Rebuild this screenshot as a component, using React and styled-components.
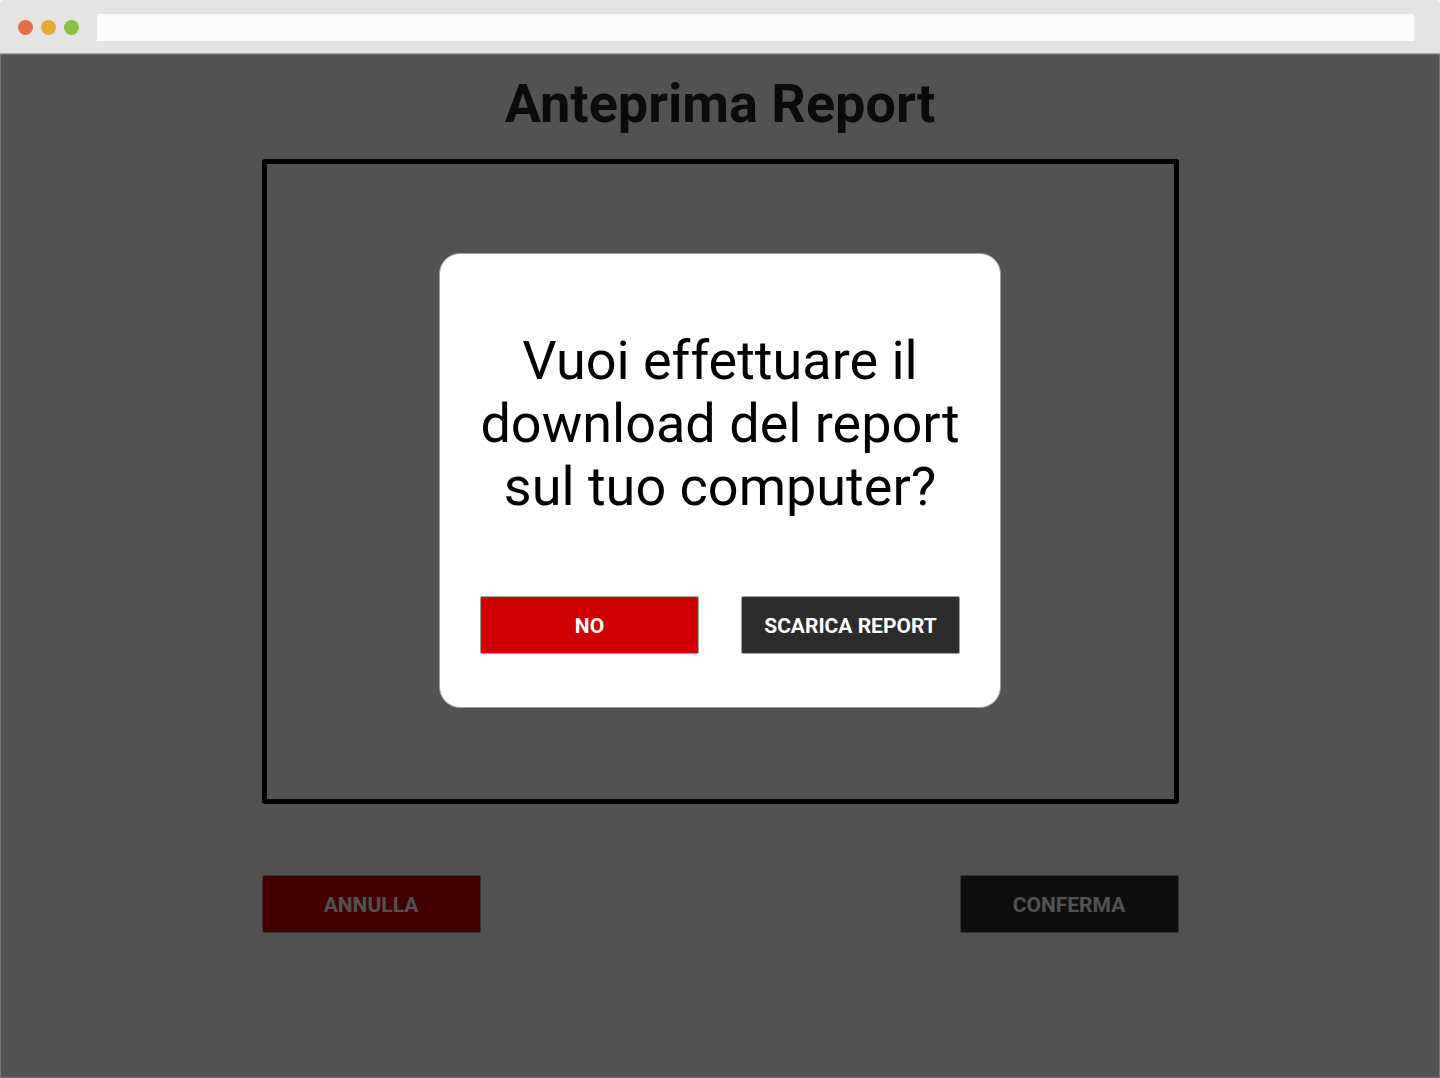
import React from "react";
import styled, { createGlobalStyle } from "styled-components";

const GlobalStyle = createGlobalStyle`
  *, *::before, *::after { box-sizing: border-box; }
  body {
    margin: 0;
    background: #ffffff;
    font-family: Roboto, "Liberation Sans", sans-serif;
  }
`;

const Window = styled.div`
  display: flex;
  flex-direction: column;
  min-height: 100vh;
`;

const TitleBar = styled.header`
  display: flex;
  align-items: center;
  gap: 18px;
  height: 54px;
  padding: 2px 26px 0 18px;
  background: #e4e4e4;
  border-bottom: 1px solid #a5a5a5;
  border-radius: 3px 3px 0 0;
`;

const Lights = styled.div`
  display: flex;
  gap: 8px;
`;

const Light = styled.span`
  width: 15px;
  height: 15px;
  border-radius: 50%;
  background: ${({ $color }) => $color};
`;

const AddressField = styled.input`
  flex: 1;
  min-width: 0;
  height: 27px;
  padding: 0 10px;
  border: 0;
  outline: none;
  background: #fbfbfb;
  font: inherit;
`;

const Viewport = styled.div`
  position: relative;
  flex: 1;
  display: flex;
  flex-direction: column;
`;

const Page = styled.main`
  display: flex;
  flex-direction: column;
  width: 100%;
  max-width: 917px;
  margin: 0 auto;
  padding: 18px 0 40px;
`;

const Title = styled.h1`
  margin: 0 0 24px;
  color: #232323;
  font-size: 54px;
  line-height: 63px;
  font-weight: 700;
  text-align: center;
`;

const PreviewFrame = styled.section`
  aspect-ratio: 917 / 645;
  border: 5px solid #000000;
  border-radius: 3px;
`;

const Actions = styled.div`
  display: flex;
  justify-content: space-between;
  gap: 20px;
  margin-top: ${({ $top }) => $top}px;
`;

const Button = styled.button`
  width: 219px;
  height: 58px;
  padding: 2px 10px 0;
  border: 1px solid #a0a0a0;
  border-radius: 2px;
  background: ${({ $danger }) => ($danger ? "#d00000" : "#2c2c2c")};
  color: #ffffff;
  font-family: inherit;
  font-size: 21px;
  line-height: 24px;
  font-weight: 700;
  white-space: nowrap;
  cursor: pointer;
`;

const Overlay = styled.div`
  position: absolute;
  inset: 0;
  display: flex;
  justify-content: center;
  align-items: flex-start;
  padding-top: 198px;
  background: rgba(0, 0, 0, 0.68);
  border: 1px solid #777777;
`;

const Dialog = styled.div`
  width: 100%;
  max-width: 562px;
  padding: 75px 40px 53px;
  border: 1px solid #a0a0a0;
  border-radius: 21px;
  background: #ffffff;
`;

const Question = styled.p`
  margin: 0;
  color: #000000;
  font-size: 54px;
  line-height: 63px;
  text-align: center;
`;

export default function App() {
  return (
    <Window>
      <GlobalStyle />
      <TitleBar>
        <Lights>
          <Light $color="#eb6e4b" />
          <Light $color="#e6aa37" />
          <Light $color="#86c440" />
        </Lights>
        <AddressField type="text" aria-label="Indirizzo" />
      </TitleBar>
      <Viewport>
        <Page>
          <Title>Anteprima Report</Title>
          <PreviewFrame />
          <Actions $top={71}>
            <Button type="button" $danger>ANNULLA</Button>
            <Button type="button">CONFERMA</Button>
          </Actions>
        </Page>
        <Overlay>
          <Dialog role="dialog" aria-modal="true" aria-labelledby="question">
            <Question id="question">
              Vuoi effettuare il download del report sul tuo computer?
            </Question>
            <Actions $top={78}>
              <Button type="button" $danger>NO</Button>
              <Button type="button">SCARICA REPORT</Button>
            </Actions>
          </Dialog>
        </Overlay>
      </Viewport>
    </Window>
  );
}
